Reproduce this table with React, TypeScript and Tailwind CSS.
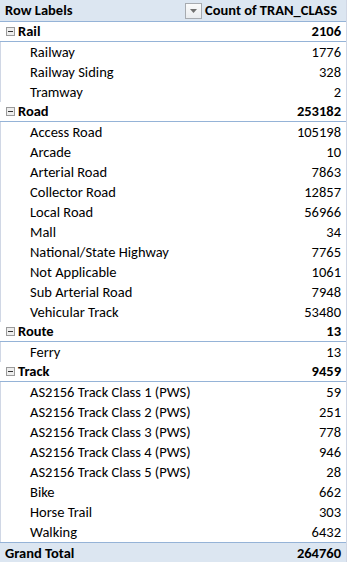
import React from "react";

type Group = { name: string; total: number; items: [string, number][] };

const groups: Group[] = [
  {
    name: "Rail",
    total: 2106,
    items: [
      ["Railway", 1776],
      ["Railway Siding", 328],
      ["Tramway", 2],
    ],
  },
  {
    name: "Road",
    total: 253182,
    items: [
      ["Access Road", 105198],
      ["Arcade", 10],
      ["Arterial Road", 7863],
      ["Collector Road", 12857],
      ["Local Road", 56966],
      ["Mall", 34],
      ["National/State Highway", 7765],
      ["Not Applicable", 1061],
      ["Sub Arterial Road", 7948],
      ["Vehicular Track", 53480],
    ],
  },
  { name: "Route", total: 13, items: [["Ferry", 13]] },
  {
    name: "Track",
    total: 9459,
    items: [
      ["AS2156 Track Class 1 (PWS)", 59],
      ["AS2156 Track Class 2 (PWS)", 251],
      ["AS2156 Track Class 3 (PWS)", 778],
      ["AS2156 Track Class 4 (PWS)", 946],
      ["AS2156 Track Class 5 (PWS)", 28],
      ["Bike", 662],
      ["Horse Trail", 303],
      ["Walking", 6432],
    ],
  },
];

const MinusBox = () => (
  <span className="mr-[3px] ml-[6px] flex h-[9px] w-[9px] items-center justify-center border border-[#9a9a9a] bg-[#eeeeee]">
    <span className="h-px w-[5px] bg-[#333]" />
  </span>
);

const FilterButton = () => (
  <span className="ml-[10px] mr-[3px] flex h-4 w-[17px] items-center justify-center border border-[#a7abb0] bg-gradient-to-b from-[#fbfbfb] to-[#e9ecef]">
    <svg width="7" height="4" viewBox="0 0 7 4">
      <path d="M0 0h7L3.5 4z" fill="#707070" />
    </svg>
  </span>
);

export default function App() {
  return (
    <div
      className="h-[562px] w-[349px] overflow-hidden bg-white text-[14.5px] leading-none text-black"
      style={{ fontFamily: "Carlito, Calibri, Lato, sans-serif" }}
    >
      <div className="border-r border-[#d0d7e5] w-[347px]">
        {/* header */}
        <div className="flex h-[22px] items-center border-b border-[#95b3d7] bg-[#dce6f1] font-bold">
          <div className="w-[175px] pl-[5px]">Row Labels</div>
          <div className="flex flex-1 items-center">
            <FilterButton />
            <span>Count of TRAN_CLASS</span>
          </div>
        </div>

        {groups.map((g) => (
          <React.Fragment key={g.name}>
            <div className="flex h-5 items-center border-b border-[#95b3d7] font-bold">
              <div className="flex w-[175px] items-center">
                <MinusBox />
                <span>{g.name}</span>
              </div>
              <div className="flex-1 pr-[5px] text-right">{g.total}</div>
            </div>
            {g.items.map(([label, n]) => (
              <div key={label} className="flex h-5 items-center border-l border-[#d0d7e5]">
                <div className="w-[174px] shrink-0 whitespace-nowrap pl-[29px]">{label}</div>
                <div className="flex-1 pr-[5px] text-right">{n}</div>
              </div>
            ))}
          </React.Fragment>
        ))}

        {/* grand total */}
        <div className="flex h-[21px] items-center border-t border-[#95b3d7] bg-[#dce6f1] font-bold">
          <div className="w-[175px] pl-[5px]">Grand Total</div>
          <div className="flex-1 pr-[5px] text-right">264760</div>
        </div>
      </div>
    </div>
  );
}
